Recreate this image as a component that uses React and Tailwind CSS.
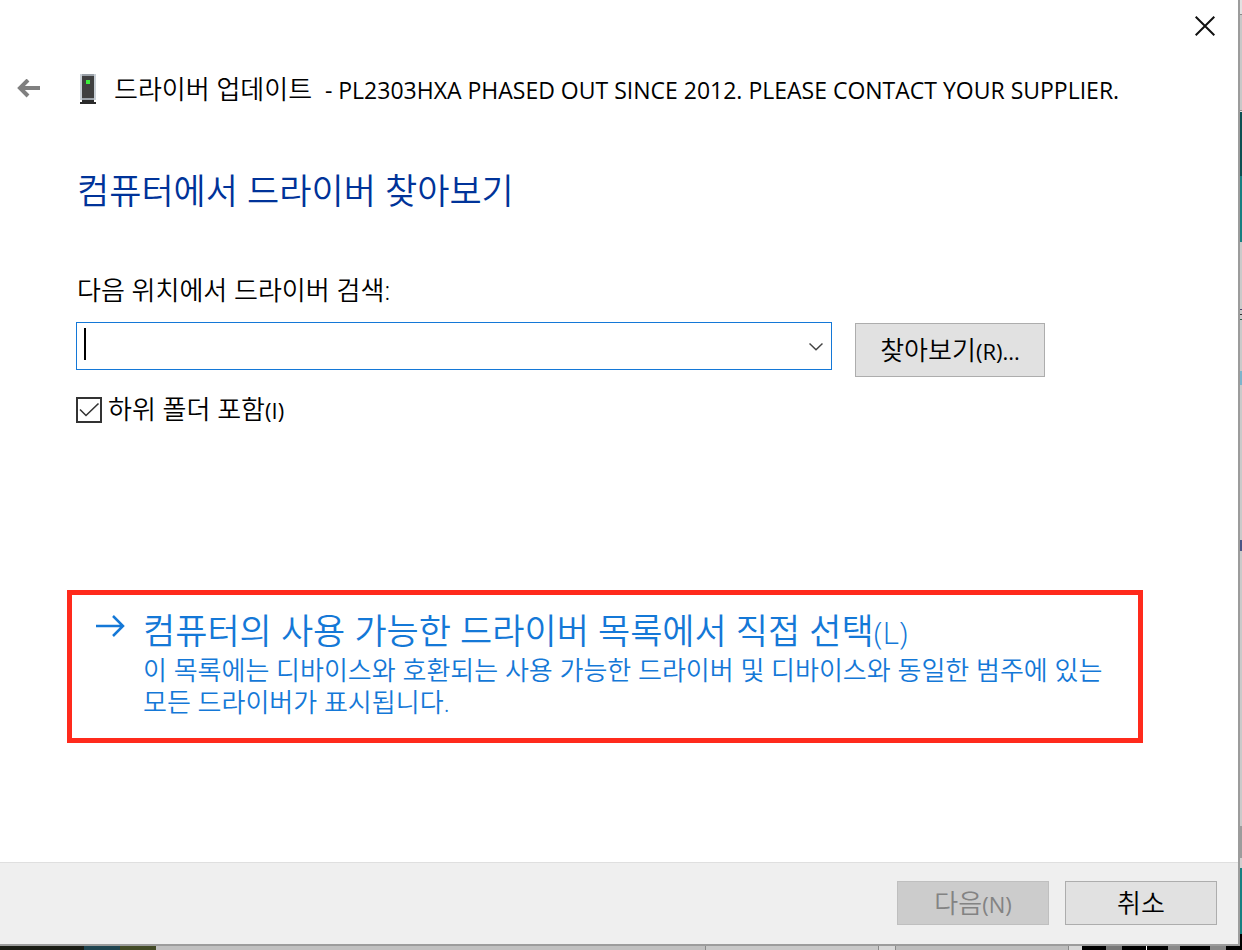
import React from 'react';

const FONT = "font-['Open_Sans','Noto_Sans_CJK_KR',sans-serif] font-[350]";

const BackIcon = () => (
  <svg width="24" height="20" viewBox="0 0 24 20" fill="none" stroke="#808080" strokeWidth="4">
    <path d="M23 9H3M11 1L3 9L11 17" />
  </svg>
);

const DeviceIcon = () => (
  <svg width="16" height="30" viewBox="0 0 16 30">
    <path fill="#c9d0d6" d="M0 0h16v26H0z" />
    <path fill="#9aa1a8" d="M2 0h12v2H2zM2 24h12v2H2z" />
    <path fill="#404040" d="M2 2h12v22H2z" />
    <path fill="#3cf03c" d="M6 6h4v4H6z" />
    <path fill="#2b2b2b" d="M2 26h12v2h2v2H0v-2h2z" />
  </svg>
);

const CloseIcon = () => (
  <svg width="20" height="20" viewBox="0 0 20 20" fill="none" stroke="#111" strokeWidth="2">
    <path d="M.7.7l18.6 18.6M19.3.7L.7 19.3" />
  </svg>
);

const ChevronIcon = () => (
  <svg width="14" height="10" viewBox="0 0 14 10" fill="none" stroke="#444" strokeWidth="1.5">
    <path d="M.5 2.5L7 8.7L13.5 2.5" />
  </svg>
);

const ArrowIcon = () => (
  <svg width="30" height="22" viewBox="0 0 30 22" fill="none" stroke="#1478d7" strokeWidth="2.5">
    <path d="M0 11h27M17 1l10 10l-10 10" />
  </svg>
);

const CheckIcon = () => (
  <svg
    className="pointer-events-none absolute inset-0"
    width="26"
    height="26"
    viewBox="0 0 26 26"
    fill="none"
    stroke="#333"
    strokeWidth="1.6"
  >
    <path d="M4 12.5L10 18.5L22.5 6.5" />
  </svg>
);

// windows that peek out from behind the dialog
const RIGHT_EDGE = [
  'h-[14px] bg-[#e2e2e2]',
  'h-px bg-[#8a8a8a]',
  'h-[95px] bg-[#c8c8c8]',
  'h-px bg-[#8a8a8a]',
  'h-px bg-[#e2e2e2]',
  'h-16 bg-[#0c5052]',
  'h-[66px] bg-[#178081]',
  'h-[67px] bg-[#cacaca]',
  'h-px bg-[#45456a]',
  'h-1 bg-[#cacaca]',
  'h-px bg-[#333]',
  'h-1 bg-[#cacaca]',
  'h-px bg-[#2f5a4a]',
  'h-[51px] bg-[#cacaca]',
  'h-[14px] bg-[#7db4cc]',
  'h-[155px] bg-[#cacaca]',
  'h-[11px] bg-[#4a5585]',
  'flex-1 bg-[#cacaca]',
  'h-8 bg-[#9c9c9c]',
  'h-[10px] bg-[#cfcfcf]',
  'h-[66px] bg-[#178081]',
  'h-[12px] bg-black',
];

const BOTTOM_EDGE = [
  'w-[84px] bg-[#1a1c14]',
  'w-[36px] bg-[#1f4450]',
  'w-[36px] bg-[#424a26]',
  'flex-1 bg-[#c0c0c0]',
  'w-px bg-[#8a8a8a]',
  'w-[172px] bg-[#c8c8c8]',
  'w-px bg-[#8a8a8a]',
  'w-4 bg-[#d8d8d8]',
  'w-px bg-[#8a8a8a]',
  'w-[172px] bg-[#bdbdbd]',
  'w-px bg-[#8a8a8a]',
  'w-[13px] bg-[#d8d8d8]',
  'w-6 bg-black',
  'w-4 bg-[#777]',
  'w-6 bg-black',
  'w-px bg-white',
  'w-[21px] bg-black',
  'w-3 bg-[#888]',
  'w-[30px] bg-black',
  'w-4 bg-[#888]',
  'w-4 bg-black',
];

const App = () => (
  <div className={`flex min-h-screen flex-col bg-white text-black ${FONT}`}>
    <div className="flex flex-1">
      <main className="flex flex-1 flex-col border-r-2 border-b-2 border-[#9c9c9c]">
        <div className="flex h-[52px] items-center justify-end pr-[23px]">
          <button type="button" aria-label="닫기">
            <CloseIcon />
          </button>
        </div>

        <header className="flex h-[74px] items-center pl-[17px]">
          <button type="button" aria-label="뒤로">
            <BackIcon />
          </button>
          <div className="ml-[39px]">
            <DeviceIcon />
          </div>
          <p className="ml-[18px] text-[26px] leading-8 whitespace-nowrap">
            드라이버 업데이트{' '}
            <span className="ml-1.5 text-[23px] font-normal">
              - PL2303HXA PHASED OUT SINCE 2012. PLEASE CONTACT YOUR SUPPLIER.
            </span>
          </p>
        </header>

        <section className="flex flex-1 flex-col pr-[95px] pl-[67px]">
          <h1 className="mt-[41px] ml-[10px] text-[35px] leading-[48px] text-[#003399]">
            컴퓨터에서 드라이버 찾아보기
          </h1>

          <label htmlFor="driver-path" className="mt-[59px] ml-[10px] text-[26px] leading-8">
            다음 위치에서 드라이버 검색:
          </label>
          <div className="mt-4 ml-[9px] flex items-start gap-[23px]">
            <div className="flex h-12 w-[756px] items-center border border-[#1478d7] pr-2 pl-[7px]">
              <span className="mt-[5px] h-8 w-[2px] self-start bg-black" />
              <input id="driver-path" type="text" className="h-full min-w-0 flex-1 text-[26px] outline-none" />
              <button type="button" aria-label="목록 열기">
                <ChevronIcon />
              </button>
            </div>
            <button
              type="button"
              className="mt-px h-[54px] w-[190px] border border-[#adadad] bg-[#e1e1e1] text-[26px] leading-8"
            >
              찾아보기<span className="text-[22px] font-normal">(R)...</span>
            </button>
          </div>
          <label className="mt-4 ml-[9px] flex items-center gap-[6px] text-[26px] leading-8">
            <span className="relative h-[26px] w-[26px]">
              <input type="checkbox" defaultChecked className="block h-[26px] w-[26px] appearance-none border-2 border-[#333]" />
              <CheckIcon />
            </span>
            <span>
              하위 폴더 포함<span className="text-[22px] font-normal">(I)</span>
            </span>
          </label>

          <div className="mt-auto mb-[119px] border-[5px] border-[#ff2a1c]">
            <button
              type="button"
              className="flex w-full items-start pt-[14px] pr-4 pb-5 pl-6 text-left break-keep text-[#1478d7]"
            >
              <span className="mt-1.5">
                <ArrowIcon />
              </span>
              <span className="ml-[17px] flex-1">
                <span className="block text-[35px] leading-[44px]">
                  컴퓨터의 사용 가능한 드라이버 목록에서 직접 선택<span className="text-[32px]">(L)</span>
                </span>
                <span className="block text-[26px] leading-8">
                  이 목록에는 디바이스와 호환되는 사용 가능한 드라이버 및 디바이스와 동일한 범주에 있는 모든 드라이버가 표시됩니다.
                </span>
              </span>
            </button>
          </div>
        </section>

        <footer className="flex justify-end gap-4 border-t border-[#dfdfdf] bg-[#efefef] pt-[18px] pr-[21px] pb-[19px]">
          <button
            type="button"
            disabled
            className="h-[44px] w-[152px] border border-[#bfbfbf] bg-[#cccccc] text-[26px] leading-8 text-[#838383]"
          >
            다음<span className="text-[22px] font-normal">(N)</span>
          </button>
          <button type="button" className="h-[44px] w-[152px] border border-[#adadad] bg-[#e1e1e1] text-[26px] leading-8">
            취소
          </button>
        </footer>
      </main>
      <div className="flex w-[2px] flex-col">
        {RIGHT_EDGE.map((edge, i) => (
          <span key={i} className={edge} />
        ))}
      </div>
    </div>
    <div className="flex h-1">
      {BOTTOM_EDGE.map((edge, i) => (
        <span key={i} className={edge} />
      ))}
    </div>
  </div>
);

export default App;
